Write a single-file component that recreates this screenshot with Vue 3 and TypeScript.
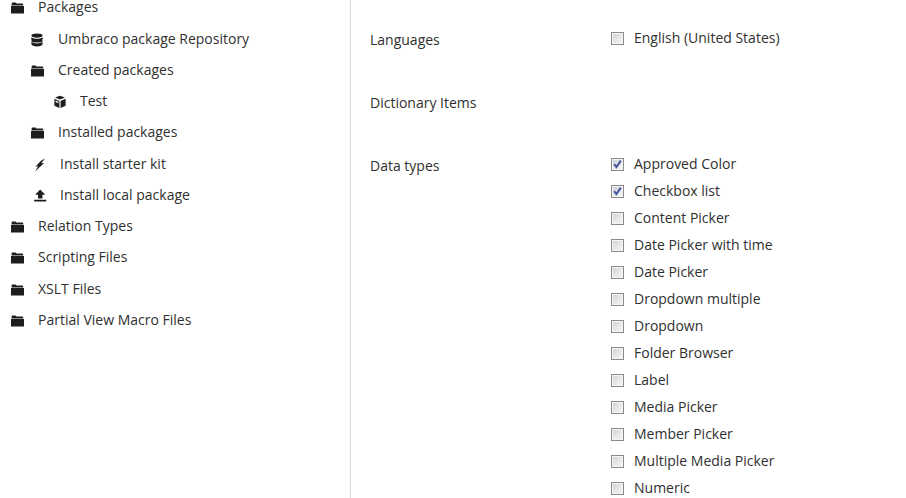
<script setup lang="ts">
type Icon = 'folder' | 'db' | 'cube' | 'bolt' | 'upload'
interface TreeRow { label: string; icon: Icon; level: number }

const tree: TreeRow[] = [
  { label: 'Packages', icon: 'folder', level: 0 },
  { label: 'Umbraco package Repository', icon: 'db', level: 1 },
  { label: 'Created packages', icon: 'folder', level: 1 },
  { label: 'Test', icon: 'cube', level: 2 },
  { label: 'Installed packages', icon: 'folder', level: 1 },
  { label: 'Install starter kit', icon: 'bolt', level: 1 },
  { label: 'Install local package', icon: 'upload', level: 1 },
  { label: 'Relation Types', icon: 'folder', level: 0 },
  { label: 'Scripting Files', icon: 'folder', level: 0 },
  { label: 'XSLT Files', icon: 'folder', level: 0 },
  { label: 'Partial View Macro Files', icon: 'folder', level: 0 },
]

const dataTypes = [
  { label: 'Approved Color', checked: true },
  { label: 'Checkbox list', checked: true },
  { label: 'Content Picker', checked: false },
  { label: 'Date Picker with time', checked: false },
  { label: 'Date Picker', checked: false },
  { label: 'Dropdown multiple', checked: false },
  { label: 'Dropdown', checked: false },
  { label: 'Folder Browser', checked: false },
  { label: 'Label', checked: false },
  { label: 'Media Picker', checked: false },
  { label: 'Member Picker', checked: false },
  { label: 'Multiple Media Picker', checked: false },
  { label: 'Numeric', checked: false },
]
</script>

<template>
  <div class="page">
    <aside class="sidebar">
      <ul class="tree">
        <li
          v-for="row in tree"
          :key="row.label"
          class="tree-row"
          :class="[`level-${row.level}`, { action: row.icon === 'bolt' || row.icon === 'upload' }]"
        >
          <svg class="icon" viewBox="0 0 14 14" aria-hidden="true">
            <path v-if="row.icon === 'folder'" d="M1.6 2.2C1.6 1.7 2 1.4 2.5 1.4H5.6L6.5 2.6H12.2C12.8 2.6 13.2 3 13.2 3.6V4.4H1.6ZM1 5H14V12.4H1Z" />
            <path v-else-if="row.icon === 'db'" d="M7 0.6C10.2 0.6 12.6 1.3 12.6 2.6C12.6 3.9 10.2 4.7 7 4.7C3.8 4.7 1.4 3.9 1.4 2.6C1.4 1.3 3.8 0.6 7 0.6ZM1.6 4.5C3 5.4 5 5.8 7 5.8C9 5.8 11 5.4 12.4 4.5C12.9 5 13 5.6 12.8 6.2C12.4 6.7 12 7 12 7C12 7 12.8 7.7 12.8 8.2C11.2 9.2 9 9.5 7 9.5C5 9.5 2.8 9.2 1.2 8.2C1.2 7.7 2 7 2 7C2 7 1.4 6.7 1.2 6.2C1 5.6 1.1 5 1.6 4.5ZM1.4 9.1C3 10 5 10.4 7 10.4C9 10.4 11 10 12.6 9.1V11C12.6 12.5 10.2 13.4 7 13.4C3.8 13.4 1.4 12.5 1.4 11Z" />
            <path v-else-if="row.icon === 'cube'" d="M7 0.8L12 2.6L7 4.6L2 2.6ZM1.4 3.8L6.4 6V13L1.4 10.8ZM12.6 3.8V10.8L7.6 13V6ZM2.6 5.6V7L5.4 8.2V6.8Z" fill-rule="evenodd" />
            <path v-else-if="row.icon === 'bolt'" d="M12 0.6L8.2 5.2L11.2 4.9L2 13.4L5.2 8.3L2.4 8.7L8 2.8Z" />
            <path v-else d="M7.2 0.6L12.2 5.8H9.4V9.6H5V5.8H2.2ZM1.2 10.8H13.2V12.4H1.2Z" />
          </svg>
          <span class="tree-label">{{ row.label }}</span>
        </li>
      </ul>
    </aside>

    <main class="content">
      <section class="field">
        <h4 class="field-label">Languages</h4>
        <div class="options">
          <label class="option">
            <span class="box"></span>
            <span>English (United States)</span>
          </label>
        </div>
      </section>

      <section class="field">
        <h4 class="field-label">Dictionary Items</h4>
      </section>

      <section class="field">
        <h4 class="field-label">Data types</h4>
        <div class="options">
          <label v-for="item in dataTypes" :key="item.label" class="option">
            <span class="box" :class="{ on: item.checked }">
              <svg v-if="item.checked" class="tick" viewBox="0 0 11 11" aria-hidden="true">
                <path d="M2.2 5.2L4.4 8L8.8 1.6" />
              </svg>
            </span>
            <span>{{ item.label }}</span>
          </label>
        </div>
      </section>
    </main>
  </div>
</template>

<style>
html, body { margin: 0; height: 100%; overflow: hidden; background: #fff; }
</style>

<style scoped>
.page {
  display: flex;
  width: 906px;
  height: 498px;
  overflow: hidden;
  font-family: "Open Sans", sans-serif;
  font-size: 14px;
  color: #303030;
  background: #fff;
}
.sidebar {
  flex: 0 0 351px;
  box-sizing: border-box;
  border-right: 1px solid #d9d9d9;
}
.tree {
  list-style: none;
  margin: -8.7px 0 0;
  padding: 0;
}
.tree-row {
  display: flex;
  align-items: center;
  height: 31.25px;
  white-space: nowrap;
}
.level-0 { padding-left: 10px; }
.level-1 { padding-left: 30px; }
.level-2 { padding-left: 53px; }
.icon {
  flex: none;
  width: 14px;
  height: 14px;
  margin-top: 3px;
  fill: #1d1d1d;
  margin-right: 14px;
}
.level-2 .icon { margin-right: 13px; }
.action .icon { margin-left: 3px; margin-right: 13px; }
.content {
  flex: 1;
  padding-left: 19px;
  padding-top: 14px;
}
.field {
  display: flex;
  min-height: 63px;
}
.field-label {
  flex: 0 0 241px;
  margin: 16px 0 0;
  font-weight: 400;
  font-size: 14px;
  line-height: 20px;
}
.options {
  display: flex;
  flex-direction: column;
  padding-top: 10px;
}
.option {
  display: flex;
  align-items: center;
  height: 27px;
  white-space: nowrap;
}
.box {
  flex: none;
  box-sizing: border-box;
  width: 13px;
  height: 13px;
  margin-top: 2px;
  margin-right: 10px;
  border: 1px solid #8a8a8a;
  background: linear-gradient(135deg, #cfcfcf 0%, #e8e8e8 55%, #f8f8f8 100%);
  box-shadow: inset 0 0 0 1px #f6f6f6;
  display: flex;
}
.box.on {
  background: linear-gradient(135deg, #c6cad6 0%, #e6e8ee 55%, #f8f8fa 100%);
}
.tick {
  width: 11px;
  height: 11px;
  fill: none;
  stroke: #46559c;
  stroke-width: 2;
}
</style>
